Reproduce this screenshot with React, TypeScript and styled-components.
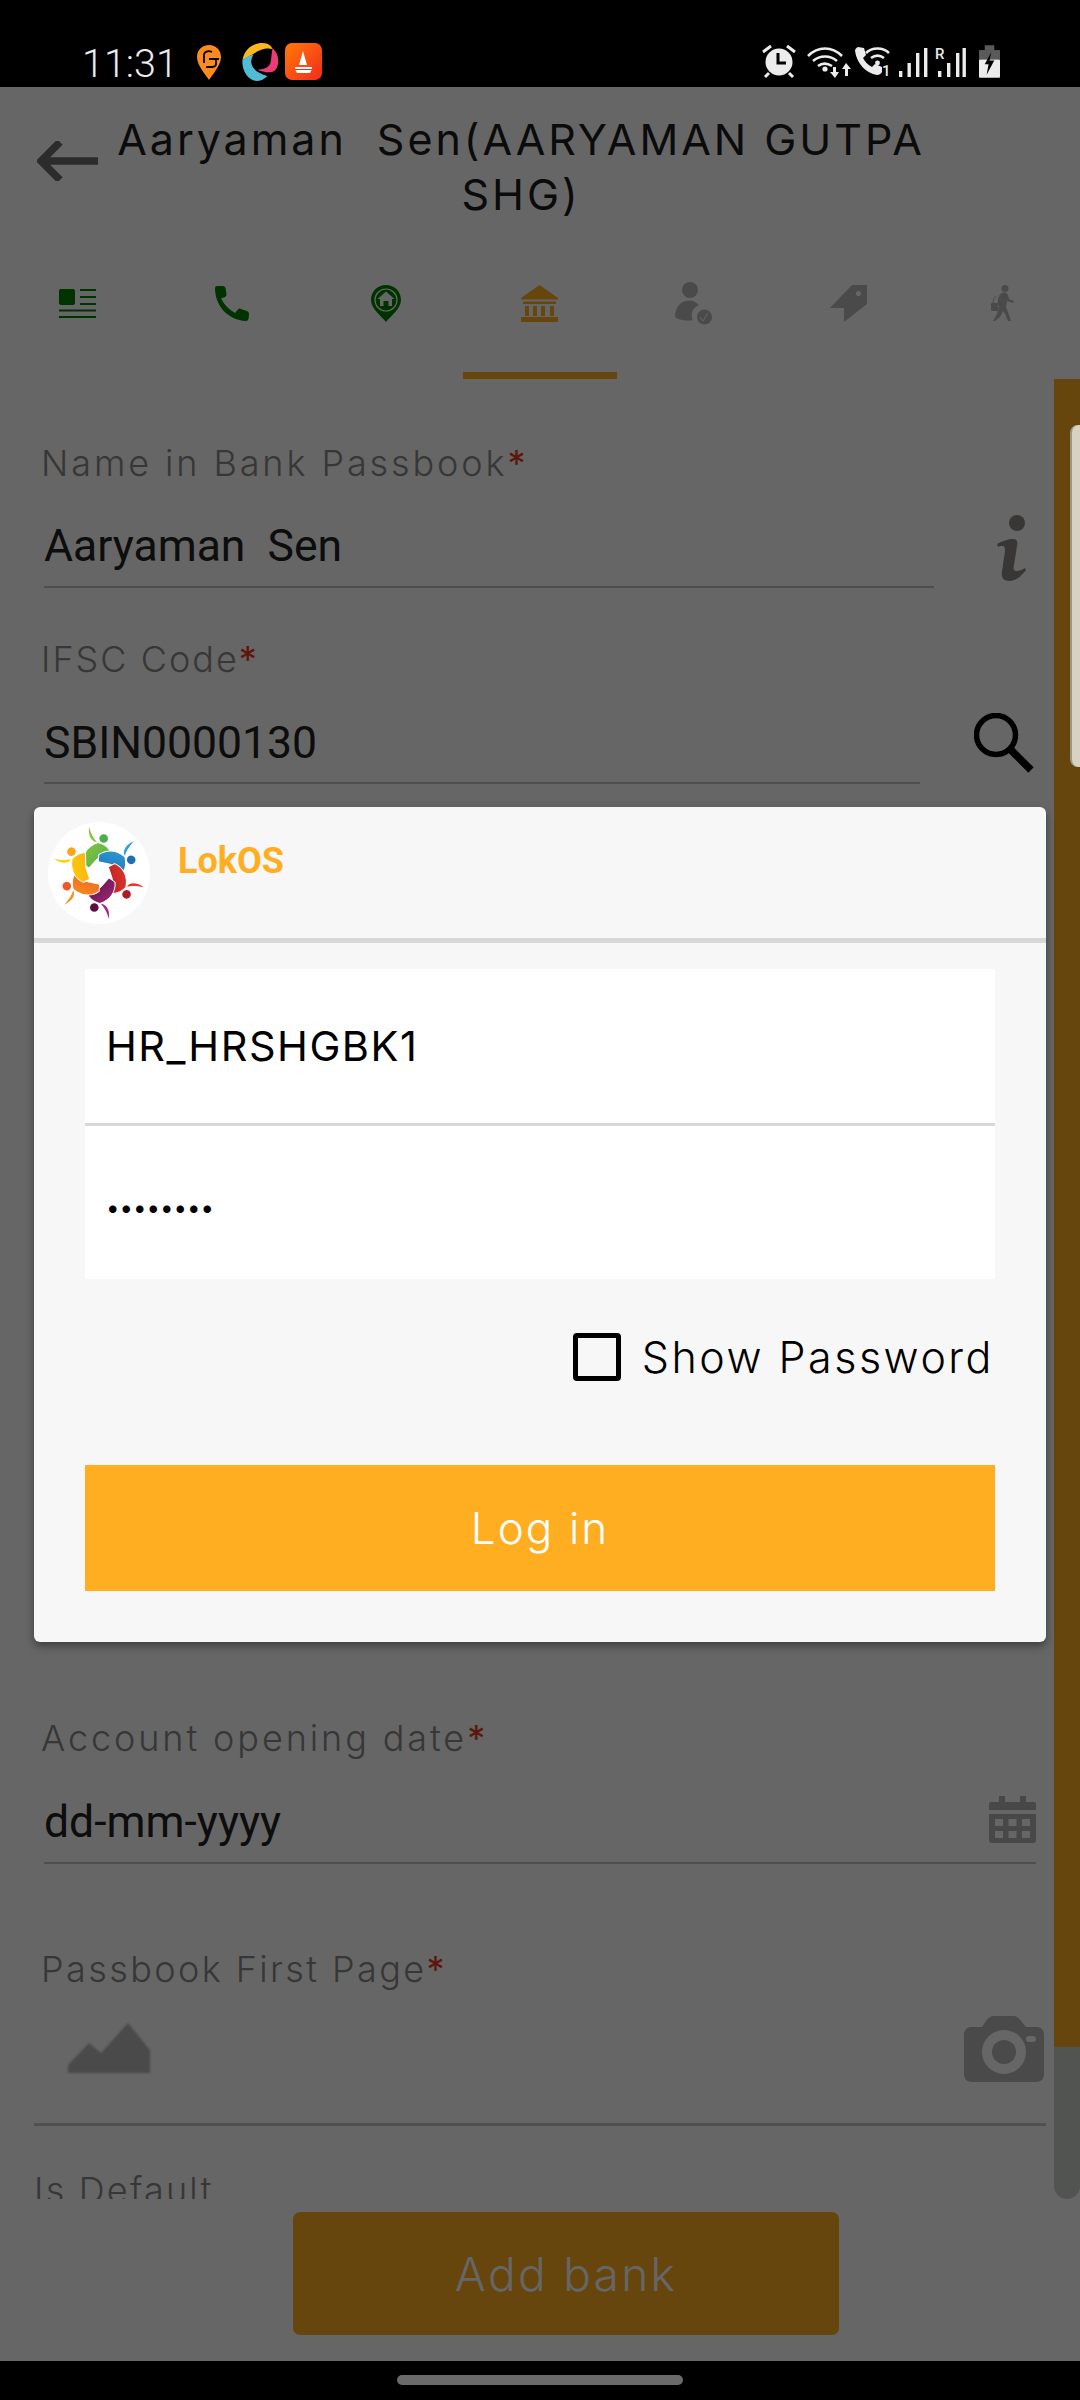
import styled, { createGlobalStyle } from 'styled-components'

const GlobalStyle = createGlobalStyle`
  html, body {
    margin: 0;
    padding: 0;
    background: #000;
  }
  * {
    box-sizing: border-box;
  }
`

const WIDE_FONT = `Inter, "Open Sans", "Liberation Sans", sans-serif`
const INPUT_FONT = `Roboto, "Liberation Sans", sans-serif`
const ORANGE = '#ffae21'

const Screen = styled.div`
  width: 1080px;
  height: 2400px;
  display: flex;
  flex-direction: column;
  overflow: hidden;
  background: #000;
`

const StatusBar = styled.div`
  height: 87px;
  flex: none;
  display: flex;
  align-items: flex-start;
  padding: 0 80px 0 82px;
  color: #ececec;
`

const Clock = styled.span`
  font: 300 39.5px/39px ${INPUT_FONT};
  margin-top: 44px;
  width: 115px;
`

const AppIcon = styled.svg<{ $top: number; $gap: number }>`
  display: block;
  flex: none;
  margin-top: ${(p) => p.$top}px;
  margin-left: ${(p) => p.$gap}px;
`

const StatusRight = styled.div`
  margin-left: auto;
  margin-top: 44px;
  display: flex;
  align-items: flex-start;
  gap: 13px;
`

const StatusSvg = styled.svg<{ $top?: number }>`
  display: block;
  flex: none;
  margin-top: ${(p) => p.$top ?? 0}px;
`

const Page = styled.div`
  position: relative;
  flex: 1;
  display: flex;
  flex-direction: column;
  background: #fff;
`

const Header = styled.div`
  height: 135px;
  flex: none;
  display: flex;
  align-items: flex-start;
  padding: 25px 0 0 37px;
`

const BackArrow = styled.svg`
  flex: none;
  margin: 29px 13px 0 0;
`

const Title = styled.div`
  width: 820px;
  flex: none;
  font: 400 43px/55px ${WIDE_FONT};
  letter-spacing: 2.95px;
  text-align: center;
  white-space: pre-wrap;
  color: #1c1c1c;
`

const TabBar = styled.div`
  height: 157px;
  flex: none;
  display: grid;
  grid-template-columns: repeat(7, 1fr);
`

const Tab = styled.div<{ $active?: boolean }>`
  display: flex;
  align-items: center;
  justify-content: center;
  padding-top: 12px;
  border-bottom: 7px solid ${(p) => (p.$active ? ORANGE : 'transparent')};
`

const Body = styled.div`
  height: 1820px;
  flex: none;
  display: flex;
`

const Form = styled.div`
  flex: 1;
  min-width: 0;
  overflow: hidden;
  padding-top: 64px;
`

const Rail = styled.div`
  width: 26px;
  flex: none;
  display: flex;
  flex-direction: column;
  background: #ced2ce;
  border-radius: 0 0 13px 13px;
`

const RailThumb = styled.div`
  height: 1668px;
  background: ${ORANGE};
`

const Label = styled.div<{ $top?: number; $left?: number; $track: number }>`
  font: 300 36px/40px ${WIDE_FONT};
  color: #8a8a8a;
  letter-spacing: ${(p) => p.$track}px;
  margin-top: ${(p) => p.$top ?? 0}px;
  padding-left: ${(p) => p.$left ?? 41}px;

  b {
    font-weight: 400;
    color: #e53a20;
  }
`

const FieldRow = styled.div<{ $top: number }>`
  display: flex;
  align-items: flex-start;
  padding-left: 44px;
  margin-top: ${(p) => p.$top}px;
`

const InputLine = styled.div<{ $width: number; $pad?: number }>`
  display: flex;
  align-items: flex-start;
  justify-content: space-between;
  width: ${(p) => p.$width}px;
  padding-bottom: ${(p) => p.$pad ?? 15}px;
  border-bottom: 2px solid #c4c4c4;
`

const Value = styled.span`
  font: 400 44.5px/50px ${INPUT_FONT};
  color: #222;
  white-space: pre;
`

const SideIcon = styled.svg<{ $left?: number; $top?: number }>`
  display: block;
  flex: none;
  margin-left: ${(p) => p.$left ?? 0}px;
  margin-top: ${(p) => p.$top ?? 0}px;
`

const BehindDialog = styled.div`
  height: 934px;
`

const PhotoRow = styled.div`
  height: 110px;
  display: flex;
  justify-content: space-between;
  align-items: flex-start;
  margin: 27px 8px 0 34px;
  padding: 0 2px 0 34px;
  border-bottom: 3px solid #c8c8c8;
`

const Placeholder = styled.svg`
  display: block;
  margin-top: 7px;
  filter: blur(1px);
`

const Footer = styled.div`
  flex: 1;
  padding: 13px 0 0 293px;
`

const AddButton = styled.div`
  width: 546px;
  height: 123px;
  display: flex;
  align-items: center;
  justify-content: center;
  border-radius: 7px;
  background: ${ORANGE};
  color: #fff;
  font: 300 46px/50px ${WIDE_FONT};
  letter-spacing: 2.3px;
`

const Scrim = styled.div`
  position: absolute;
  inset: 0;
  background: rgba(0, 0, 0, 0.6);
`

const EdgeHandle = styled.div`
  position: absolute;
  top: 338px;
  right: 0;
  width: 10px;
  height: 342px;
  background: #d8d2c2;
  border-left: 2px solid #9a9688;
  border-radius: 8px 0 0 8px;
`

const Dialog = styled.div`
  position: absolute;
  top: 720px;
  left: 34px;
  width: 1012px;
  background: #f7f7f7;
  border-radius: 6px;
  box-shadow: 0 4px 8px rgba(0, 0, 0, 0.4);
`

const DialogHeader = styled.div`
  height: 136px;
  display: flex;
  align-items: flex-start;
  padding: 15px 0 0 14px;
  border-bottom: 5px solid #d8d8d8;
`

const LogoCircle = styled.svg`
  display: block;
  flex: none;
`

const Brand = styled.span`
  font: 700 36px/40px ${INPUT_FONT};
  color: ${ORANGE};
  margin: 19px 0 0 28px;
`

const DialogBody = styled.div`
  padding: 26px 51px 51px;
`

const Credentials = styled.div`
  background: #fff;
`

const CredentialRow = styled.div<{ $divided?: boolean }>`
  height: ${(p) => (p.$divided ? 157 : 153)}px;
  display: flex;
  align-items: center;
  padding-left: 21px;
  border-bottom: ${(p) => (p.$divided ? '3px solid #d8d8d8' : 'none')};
  font: 400 41.5px/50px ${WIDE_FONT};
  letter-spacing: 1.5px;
  color: #000;
`

const Dots = styled.span`
  font: 400 24px/24px ${WIDE_FONT};
  letter-spacing: 0;
  margin-top: 10px;
`

const ShowRow = styled.div`
  display: flex;
  align-items: center;
  justify-content: flex-end;
  gap: 21px;
  margin-top: 54px;
  padding-right: 1px;
  font: 300 43px/48px ${WIDE_FONT};
  letter-spacing: 2.5px;
  color: #000;
`

const Checkbox = styled.span`
  width: 48px;
  height: 48px;
  flex: none;
  border: 5px solid #000;
  border-radius: 4px;
`

const LoginButton = styled.div`
  height: 126px;
  margin-top: 84px;
  display: flex;
  align-items: center;
  justify-content: center;
  background: ${ORANGE};
  color: #fff;
  font: 300 44px/50px ${WIDE_FONT};
  letter-spacing: 2.1px;
`

const NavBar = styled.div`
  height: 39px;
  flex: none;
  display: flex;
  justify-content: center;
  padding-top: 14px;
`

const HomeHandle = styled.div`
  width: 286px;
  height: 10px;
  border-radius: 5px;
  background: #6a6a6a;
`

const GREEN = '#007f00'
const GRAY = '#b8b8b8'
const ICON_WHITE = '#ececec'

function Swiggy() {
  return (
    <AppIcon $top={45} $gap={0} width="24" height="35" viewBox="0 0 24 35">
      <path d="M12 0C5 0 0 5 0 12c0 8 8 17 12 23 4-6 12-15 12-23C24 5 19 0 12 0z" fill="#fb8a1f" />
      <path d="M7 18V10c0-3 4-5 8-3M12 14h10M19 14v5c0 2-2 3-5 3H9" fill="none" stroke="#000" strokeWidth="1.8" />
    </AppIcon>
  )
}

function SwirlApp() {
  return (
    <AppIcon $top={43} $gap={17} width="45" height="38" viewBox="0 0 38 38">
      <path d="M1 17C3 6 11 0 21 0c6 0 9 3 10 6-8-2-15 2-19 5-4 2-8 4-11 6z" fill="#fbb81f" />
      <path d="M31 5c5 5 7 11 5 18-2 7-8 8-20 4 6-1 11-2 13-7 1-5 1-10 2-15z" fill="#ef3a78" />
      <path d="M1 17c3-3 7-5 11-5-3 4-3 9 0 13 3 4 8 6 14 8-3 3-7 5-11 5C6 37 0 27 1 17z" fill="#52bcd6" />
    </AppIcon>
  )
}

function BoatApp() {
  return (
    <AppIcon $top={43} $gap={2} width="37" height="37" viewBox="0 0 37 37">
      <defs>
        <linearGradient id="boatBg" x1="0" y1="0" x2="1" y2="1">
          <stop offset="0" stopColor="#ff7a06" />
          <stop offset="1" stopColor="#f42a1e" />
        </linearGradient>
      </defs>
      <rect width="37" height="37" rx="7" fill="url(#boatBg)" />
      <path d="M18 8l4 14h-8z" fill="#fff" />
      <path d="M10 24h17v2l-2 4H12l-2-4z" fill="#fff" />
      <rect x="10" y="26" width="17" height="1" fill="#f42a1e" />
    </AppIcon>
  )
}

function StatusIcons() {
  return (
    <StatusSvg width="204" height="36" viewBox="0 0 204 36" fill={ICON_WHITE}>
      <circle cx="17" cy="18" r="13.5" />
      <path d="M16 9v10h8" fill="none" stroke="#000" strokeWidth="3" />
      <path d="M1 8l8-6M33 8l-8-6M7 29l-4 4M27 29l4 4" stroke={ICON_WHITE} strokeWidth="3" />
      <g fill="none" stroke={ICON_WHITE} strokeWidth="2.6">
        <path d="M46 12c10-10 24-10 34 0M51 17c7-6 17-6 24 0M56 22c4-3 9-3 14 0" />
        <path d="M104 9c6-6 17-6 23 0M109 14c4-3 9-3 13 0" />
      </g>
      <circle cx="63" cy="25" r="2.6" />
      <path d="M73 34l-5-6h3v-5h3v5h3zM84 19l5 6h-3v7h-3v-7h-3z" />
      <circle cx="115.500" cy="19" r="2.400" />
      <path
        transform="translate(-8 0)"
        d="M104 3l6 1 2 7-3 3c2 4 5 7 9 9l3-3 7 3v5c-1 2-3 3-5 3-11-2-20-11-22-24 0-2 1-3 3-4z"
      />
      <text x="120" y="32" fontFamily="Roboto" fontSize="15" fontWeight="500">
        1
      </text>
      <rect x="137" y="27" width="3.400" height="6" />
      <rect x="145.500" y="19" width="3.400" height="14" />
      <rect x="154" y="9" width="3.400" height="24" />
      <rect x="162" y="4" width="3.400" height="29" />
      <text x="173" y="15" fontFamily="Roboto" fontSize="15" fontWeight="500">
        R
      </text>
      <rect x="176" y="27" width="3.400" height="6" />
      <rect x="185" y="19" width="3.400" height="14" />
      <rect x="194" y="9" width="3.400" height="24" />
      <rect x="200.500" y="4" width="3.400" height="29" />
    </StatusSvg>
  )
}

function Battery() {
  return (
    <StatusSvg $top={1} width="21" height="33" viewBox="0 0 22 34">
      <rect x="6" y="0" width="10" height="5" fill="#5a5a5a" />
      <rect x="0" y="5" width="22" height="10" fill="#5a5a5a" />
      <rect x="0" y="15" width="22" height="19" rx="1" fill={ICON_WHITE} />
      <path d="M13 7l-7 13h4l-2 11 8-15h-5z" fill="#000" />
    </StatusSvg>
  )
}

function NewsIcon() {
  return (
    <svg width="37" height="29" viewBox="0 0 37 29" fill={GREEN}>
      <rect width="16" height="16" rx="2" />
      <rect x="21" y="0" width="16" height="2" />
      <rect x="21" y="7" width="16" height="2" />
      <rect x="21" y="14" width="16" height="2" />
      <rect y="20.500" width="37" height="2" />
      <rect y="27" width="37" height="2" />
    </svg>
  )
}

function PhoneIcon() {
  return (
    <svg width="35" height="35" viewBox="0 0 35 35" fill={GREEN}>
      <path d="M1 2Q1 0 3 0L9 0Q11 0 11.5 2L12.5 8Q12.7 10 11 11L7 12.5Q12 22 21 27L24 23.5Q25 22 27 23L33 25Q35 26 35 28L34.5 33Q34 35 32 35C14 34 1 20 1 2Z" />
    </svg>
  )
}

function PinIcon() {
  return (
    <svg width="30" height="37" viewBox="0 0 30 37">
      <path d="M15 0C6.500 0 0 6.500 0 15c0 8 9 15 15 22 6-7 15-14 15-22C30 6.500 23.500 0 15 0z" fill={GREEN} />
      <circle cx="15" cy="15" r="11" fill="none" stroke="#fff" strokeWidth="1.200" />
      <path d="M15 6.500l8.500 7.500H21v7h-3.500v-5h-5v5H9v-7H6.500z" fill="#fff" />
    </svg>
  )
}

function BankIcon() {
  return (
    <svg width="37" height="37" viewBox="0 0 37 37" fill={ORANGE}>
      <path d="M18.500 0L37 13v1.500H0V13z" />
      <rect x="2" y="16.500" width="33" height="2.500" />
      <rect x="4" y="21" width="4" height="10" />
      <rect x="12" y="21" width="4" height="10" />
      <rect x="20" y="21" width="4" height="10" />
      <rect x="29" y="21" width="4" height="10" />
      <rect y="32" width="37" height="5" />
    </svg>
  )
}

function PersonCheckIcon() {
  return (
    <svg width="38" height="43" viewBox="0 0 38 43" fill={GRAY}>
      <circle cx="15" cy="8" r="8" />
      <path d="M0 35C0 25 6 18.500 14 18.500c4 0 8 2 10 5-5 1-8 6-7 12 0 1 .3 2 .8 3C10 39 4 38 0 35z" />
      <circle cx="29.500" cy="35" r="7.500" />
      <path d="M25 35l3 4 5-8" fill="none" stroke="#fff" strokeWidth="1" />
    </svg>
  )
}

function TagIcon() {
  return (
    <svg width="37" height="37" viewBox="0 0 37 37" fill={GRAY}>
      <path d="M22 0h15v19L14 37V23H0z" />
      <circle cx="28.500" cy="8.500" r="2.500" fill="#fff" />
    </svg>
  )
}

function WalkerIcon() {
  return (
    <svg width="23" height="37" viewBox="0 0 23 37" fill={GRAY}>
      <circle cx="14" cy="3.500" r="3.500" />
      <path d="M11 8c3-1 5 0 6 2l1 4 5 2-1 2-6-2-1 6 3 8 2 6h-3l-3-7-2-3-3 6-5 4H2l4-7 2-8-1-1c-1-3 0-10 4-12z" />
      <rect x="0" y="18" width="7" height="8" rx="1" />
      <path d="M2 18c0-3 1-6 3-7" fill="none" stroke={GRAY} strokeWidth="1" />
    </svg>
  )
}

const TABS = [
  <NewsIcon key="news" />,
  <PhoneIcon key="phone" />,
  <PinIcon key="pin" />,
  <BankIcon key="bank" />,
  <PersonCheckIcon key="person" />,
  <TagIcon key="tag" />,
  <WalkerIcon key="walker" />,
]

const LOGO_BLADES = [
  { from: '#8cc63f', to: '#4cae4c', rotate: 0 },
  { from: '#2f9fd8', to: '#1e6fb5', rotate: 60 },
  { from: '#e8392b', to: '#a81e22', rotate: 120 },
  { from: '#a52a80', to: '#5b0f3f', rotate: 180 },
  { from: '#f7941e', to: '#ee5a24', rotate: 240 },
  { from: '#ffd200', to: '#f9a51a', rotate: 300 },
]

function Logo() {
  return (
    <LogoCircle width="102" height="102" viewBox="0 0 102 102">
      <defs>
        {LOGO_BLADES.map((b) => (
          <linearGradient key={b.rotate} id={`blade${b.rotate}`} x1="0" y1="0" x2="1" y2="1">
            <stop offset="0" stopColor={b.from} />
            <stop offset="1" stopColor={b.to} />
          </linearGradient>
        ))}
      </defs>
      <circle cx="51" cy="51" r="51" fill="#fff" />
      {LOGO_BLADES.map((b) => (
        <g key={b.rotate} transform={`rotate(${b.rotate} 51 51)`} fill={`url(#blade${b.rotate})`}>
          <path d="M35 42C34 32 40 24 50 20.500C55 22 59 24 62 29L49 37L41 46Z" stroke="#fff" strokeWidth="1" />
          <circle cx="55.700" cy="16.500" r="4.300" fill={b.to} />
          <path d="M41 5C40 13 43 20 49 20C46 17 43 12 41 5Z" fill={b.from} />
        </g>
      ))}
    </LogoCircle>
  )
}

export default function App() {
  return (
    <Screen>
      <GlobalStyle />
      <StatusBar>
        <Clock>11:31</Clock>
        <Swiggy />
        <SwirlApp />
        <BoatApp />
        <StatusRight>
          <StatusIcons />
          <Battery />
        </StatusRight>
      </StatusBar>

      <Page>
        <Header>
          <BackArrow width="61" height="40" viewBox="0 0 61 40">
            <path d="M61 20H4M23 1L4 20l19 19" fill="none" stroke="#6e6e6e" strokeWidth="7.500" />
          </BackArrow>
          <Title>Aaryaman  Sen(AARYAMAN GUTPA SHG)</Title>
        </Header>

        <TabBar>
          {TABS.map((icon, i) => (
            <Tab key={i} $active={i === 3}>
              {icon}
            </Tab>
          ))}
        </TabBar>

        <Body>
          <Form>
            <Label $track={2.9}>
              Name in Bank Passbook<b>*</b>
            </Label>
            <FieldRow $top={38}>
              <InputLine $width={890}>
                <Value>Aaryaman  Sen</Value>
              </InputLine>
              <SideIcon $left={63} $top={-6} width="29" height="66" viewBox="0 0 29 66" fill="#908888">
                <circle cx="20" cy="8" r="8" />
                <path d="M0 29c5-3 11-5 16-5 4 0 5 3 4 7l-3 19c-1 4 0 6 3 6 2 0 5-1 8-3l1 2c-4 5-9 11-17 11-6 0-8-4-7-10l3-20c0-4-1-5-3-5-1 0-3 0-4 1z" />
              </SideIcon>
            </FieldRow>

            <Label $top={51} $track={2}>
              IFSC Code<b>*</b>
            </Label>
            <FieldRow $top={39}>
              <InputLine $width={876} $pad={14}>
                <Value>SBIN0000130</Value>
              </InputLine>
              <SideIcon $left={54} $top={-5} width="60" height="60" viewBox="0 0 60 60">
                <circle cx="22" cy="22" r="19.500" fill="none" stroke="#000" strokeWidth="5.500" />
                <path d="M37 37l20 20" fill="none" stroke="#000" strokeWidth="7.500" />
              </SideIcon>
            </FieldRow>

            <BehindDialog />

            <Label $track={2.9}>
              Account opening date<b>*</b>
            </Label>
            <FieldRow $top={39}>
              <InputLine $width={992}>
                <Value>dd-mm-yyyy</Value>
                <SideIcon $top={-1} width="47" height="47" viewBox="0 0 47 47" fill="#b4b4b4">
                  <rect x="10" y="0" width="6" height="8" />
                  <rect x="31" y="0" width="6" height="8" />
                  <path d="M2 6h43a2 2 0 0 1 2 2v6H0V8a2 2 0 0 1 2-2z" />
                  <path
                    fillRule="evenodd"
                    d="M0 18h47v26a3 3 0 0 1-3 3H3a3 3 0 0 1-3-3zM6 23v7h8v-7zM19.500 23v7h8v-7zM33 23v7h8v-7zM6 35v7h8v-7zM19.500 35v7h8v-7zM33 35v7h8v-7z"
                  />
                </SideIcon>
              </InputLine>
            </FieldRow>

            <Label $top={85} $track={2.4}>
              Passbook First Page<b>*</b>
            </Label>
            <PhotoRow>
              <Placeholder width="82" height="50" viewBox="0 0 82 50" fill="#b8b8b8">
                <path d="M0 50V42L21 20L33 30L60 0L82 27V50Z" />
              </Placeholder>
              <SideIcon width="80" height="66" viewBox="0 0 80 66">
                <path
                  fill="#b8b8b8"
                  fillRule="evenodd"
                  d="M30 0h19c4 0 6 2 8 5l5 6h10c5 0 8 3 8 8v39c0 5-3 8-8 8H8c-5 0-8-3-8-8V19c0-5 3-8 8-8h10l4-6c2-3 4-5 8-5zM40 14a22 22 0 1 0 0 44 22 22 0 0 0 0-44zM65 20a3 3 0 0 0 0 6h4a3 3 0 0 0 0-6z"
                />
                <circle cx="40" cy="36" r="12" fill="#b8b8b8" />
              </SideIcon>
            </PhotoRow>

            <Label $top={44} $left={34} $track={2.2}>
              Is Default
            </Label>
          </Form>
          <Rail>
            <RailThumb />
          </Rail>
        </Body>

        <Footer>
          <AddButton>Add bank</AddButton>
        </Footer>

        <Scrim />
        <EdgeHandle />

        <Dialog>
          <DialogHeader>
            <Logo />
            <Brand>LokOS</Brand>
          </DialogHeader>
          <DialogBody>
            <Credentials>
              <CredentialRow $divided>HR_HRSHGBK1</CredentialRow>
              <CredentialRow>
                <Dots>••••••••</Dots>
              </CredentialRow>
            </Credentials>
            <ShowRow>
              <Checkbox />
              Show Password
            </ShowRow>
            <LoginButton>Log in</LoginButton>
          </DialogBody>
        </Dialog>
      </Page>

      <NavBar>
        <HomeHandle />
      </NavBar>
    </Screen>
  )
}
